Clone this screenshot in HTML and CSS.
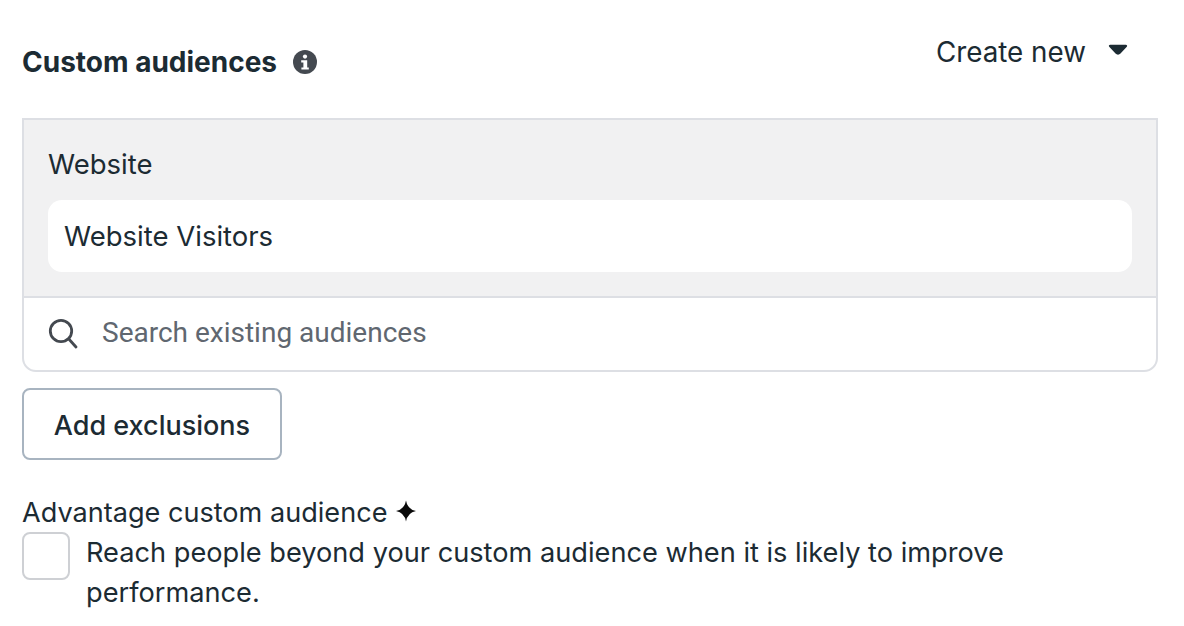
FILE: index.html
```html
<!DOCTYPE html>
<html lang="en">

<head>
  <meta charset="UTF-8" />
  <title>Custom audiences</title>
  <link rel="stylesheet" href="styles.css">
</head>

<body>
  <div class="panel">
    <div class="header">
      <div class="title-group">
        <h2>Custom audiences</h2>
        <svg class="info-icon" width="24" height="24" viewBox="0 0 24 24">
          <circle cx="12" cy="12" r="12" fill="#444950" />
          <circle cx="12" cy="6.6" r="2.100" fill="#fff" />
          <path d="M8.200 10.200h6v7.200h1.600v2.200H8.400v-2.200h2v-5H8.200z" fill="#fff" />
        </svg>
      </div>
      <div class="create-new">
        <span>Create new</span>
        <svg width="20" height="12" viewBox="0 0 20 12">
          <path d="M2.200 .8h15.600c1.200 0 1.800 1.100 1 2l-6.300 6.800c-1.300 1.400-3.700 1.400-5 0L1.200 2.800c-.8-.9-.2-2 1-2z" fill="#1c2b33" />
        </svg>
      </div>
    </div>

    <div class="audience-box">
      <div class="selected-group">
        <div class="group-label">Website</div>
        <div class="chip">Website Visitors</div>
      </div>
      <div class="search-row">
        <svg width="32" height="32" viewBox="0 0 32 32" fill="none" stroke="#444950" stroke-width="2.800" stroke-linecap="round">
          <circle cx="13" cy="13" r="10.700" />
          <path d="M20.800 21l7.200 8" />
        </svg>
        <span class="placeholder">Search existing audiences</span>
      </div>
    </div>

    <button class="exclusions-btn">Add exclusions</button>

    <div class="advantage">
      <div class="advantage-title">
        <span>Advantage custom audience</span>
        <svg width="22" height="22" viewBox="0 0 22 22">
          <path d="M11 .5Q12.600 9.400 21 11 12.600 12.600 11 21.500 9.400 12.600 1 11 9.400 9.400 11 .5z" fill="#0a0a0a" />
        </svg>
      </div>
      <div class="advantage-row">
        <div class="checkbox"></div>
        <p>Reach people beyond your custom audience when it is likely to improve performance.</p>
      </div>
    </div>
  </div>
</body>

</html>
```

FILE: styles.css
```css
* {
  box-sizing: border-box;
}

body {
  margin: 0;
  background: #fff;
  color: #1c2b33;
  font-family: Inter, "Liberation Sans", sans-serif;
  font-size: 27.2px;
}

.panel {
  width: 1136px;
  margin-left: 22px;
  padding-top: 32px;
}

.header {
  display: flex;
  justify-content: space-between;
  height: 86px;
}

.title-group {
  display: flex;
  align-items: flex-start;
  gap: 16px;
}

h2 {
  margin: 0;
  font-size: 28px;
  line-height: 60px;
  margin-top: -32px;
  padding-top: 32px;
  font-weight: 700;
}

.info-icon {
  margin-top: 18px;
}

.create-new {
  display: flex;
  gap: 22px;
  margin-top: -32px;
  padding-top: 34px;
  padding-right: 30px;
  font-size: 27.8px;
  line-height: 36px;
}

.create-new svg {
  margin-top: 10px;
}

.audience-box {
  border: 2px solid #dddfe4;
  border-radius: 0 0 14px 14px;
  overflow: hidden;
}

.selected-group {
  background: #f1f1f2;
  padding: 26px 24px 24px;
  border-bottom: 2px solid #dddfe4;
}

.group-label {
  font-size: 27.5px;
  line-height: 36px;
  margin-bottom: 18px;
}

.chip {
  height: 72px;
  padding: 0 16px;
  background: #fff;
  border-radius: 14px;
  font-size: 27.5px;
  line-height: 72px;
}

.search-row {
  display: flex;
  align-items: center;
  gap: 22px;
  height: 72px;
  padding-left: 24px;
}

.placeholder {
  color: #606770;
  font-family: Roboto, sans-serif;
  font-size: 28px;
  margin-top: -4px;
}

.exclusions-btn {
  display: block;
  width: 260px;
  height: 72px;
  margin-top: 16px;
  padding: 2px 0 0;
  background: #fff;
  border: 2px solid #a8b4c0;
  border-radius: 8px;
  color: inherit;
  font: inherit;
  font-size: 27px;
  font-weight: 450;
}

.advantage {
  margin-top: 34px;
}

.advantage-title {
  display: flex;
  align-items: center;
  gap: 8px;
  padding-top: 1px;
  height: 36px;
  font-size: 27.1px;
  line-height: 36px;
}

.advantage-title svg {
  margin-top: -3px;
}

.advantage-row {
  display: flex;
  gap: 16px;
  margin-top: 2px;
}

.checkbox {
  flex: none;
  width: 48px;
  height: 48px;
  background: #fff;
  border: 2px solid #ced0d4;
  border-radius: 8px;
}

.advantage-row p {
  margin: 1px 0 0;
  line-height: 40px;
  width: 960px;
}
```
